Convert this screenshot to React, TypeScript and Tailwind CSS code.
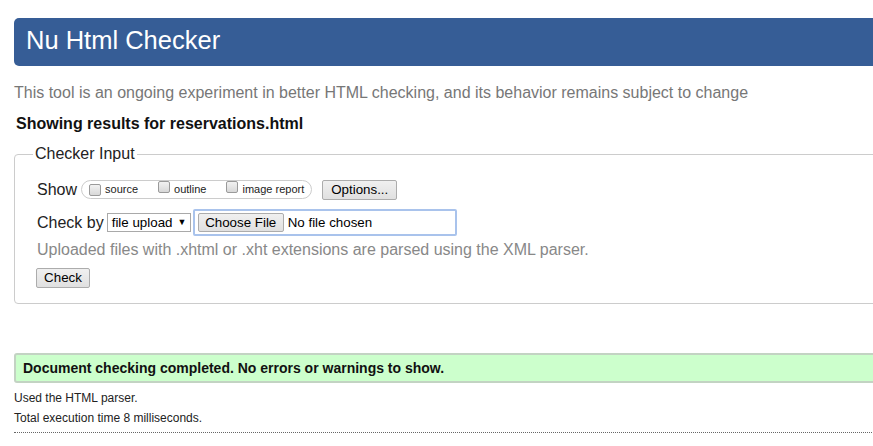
import React from "react";

const Checkbox = () => (
  <span className="inline-block w-[12px] h-[12px] border border-[#9a9a9a] rounded-[2px] bg-gradient-to-b from-[#f2f2f2] to-[#d8d8d8] shrink-0" />
);

const Btn = ({ children, className = "" }: { children: React.ReactNode; className?: string }) => (
  <span
    className={
      "inline-flex items-center justify-center border border-[#acacac] rounded-[2px] bg-gradient-to-b from-[#f0f0f0] to-[#e0e0e0] text-[13.33px] text-black leading-none " +
      className
    }
  >
    {children}
  </span>
);

export default function App() {
  return (
    <div className="w-[873px] h-[446px] overflow-hidden bg-white font-['Liberation_Sans',Arial,sans-serif] text-black">
      <div className="w-[900px] ml-[14px] pt-[18px]">
        <div className="h-[48px] bg-[#365d96] rounded-[5px] flex items-center pl-[12px] pb-[3px]">
          <h1 className="text-[25.5px] text-white leading-none">Nu Html Checker</h1>
        </div>

        <p className="mt-[18px] text-[16px] leading-[18px] text-[#777777]">
          This tool is an ongoing experiment in better HTML checking, and its behavior remains subject to change
        </p>

        <p className="mt-[13px] ml-[2px] text-[16px] leading-[18px] font-bold text-[#111]">
          Showing results for reservations.html
        </p>

        <fieldset className="mt-[12px] border border-[#cccccc] rounded-[4px] pl-[22px] pb-[14px]">
          <legend className="ml-[-4px] px-[2px] text-[16px] leading-[18px] text-[#222]">Checker Input</legend>

          <div className="mt-[17px] flex items-center h-[19px]">
            <span className="text-[16px] leading-none text-[#222]">Show</span>
            <span className="ml-[4px] h-[19px] rounded-full border border-[#cccccc] flex items-center pl-[7px] pr-[7px] text-[11px] text-[#222]">
              <Checkbox />
              <span className="ml-[4px]">source</span>
              <span className="ml-[20px]"><Checkbox /></span>
              <span className="ml-[4px]">outline</span>
              <span className="ml-[20px]"><Checkbox /></span>
              <span className="ml-[4px]">image report</span>
            </span>
            <Btn className="ml-[10px] w-[75px] h-[20px]">Options...</Btn>
          </div>

          <div className="mt-[10px] flex items-center h-[27px]">
            <span className="text-[16px] leading-none text-[#222]">Check by</span>
            <span className="ml-[3px] h-[19px] w-[84px] border border-[#a9a9a9] bg-white flex items-center pl-[4px] text-[13.33px] leading-none">
              file upload
              <span className="ml-[5px] text-[9px]">▼</span>
            </span>
            <span className="ml-[2px] h-[27px] w-[264px] border-2 border-[#a9c3ec] rounded-[2px] flex items-center pl-[3px]">
              <Btn className="w-[86px] h-[19px]">Choose File</Btn>
              <span className="ml-[4px] text-[13.33px] leading-none">No file chosen</span>
            </span>
          </div>

          <p className="mt-[5px] text-[16px] leading-[18px] text-[#888888]">
            Uploaded files with .xhtml or .xht extensions are parsed using the XML parser.
          </p>

          <div className="mt-[6px]">
            <Btn className="ml-[-1px] w-[54px] h-[20px]">Check</Btn>
          </div>
        </fieldset>

        <div className="mt-[49px] h-[30px] bg-[#ccffcc] border-2 border-[#c3d3c3] rounded-l-[3px] flex items-center pl-[7px]">
          <span className="text-[14px] font-bold leading-none text-[#111]">
            Document checking completed. No errors or warnings to show.
          </span>
        </div>

        <p className="mt-[5px] text-[12px] leading-[20px] text-[#222]">Used the HTML parser.</p>
        <p className="text-[12px] leading-[20px] text-[#222]">Total execution time 8 milliseconds.</p>
        <div className="mt-[4px] border-t border-dotted border-[#666666]" />
      </div>
    </div>
  );
}
